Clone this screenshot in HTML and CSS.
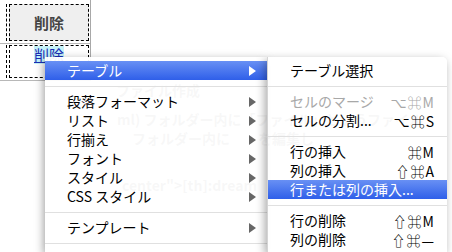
FILE: index.html
```html
<!DOCTYPE html>
<html lang="ja">
<head>
<meta charset="utf-8">
<link rel="stylesheet" href="styles.css">
</head>
<body>
<div class="doc">
  <div class="grid">
    <div class="row r1">
      <div class="stub"></div>
      <div class="cell th">削除</div>
    </div>
    <div class="row r2">
      <div class="stub"></div>
      <div class="cell td"><a class="lnk" href="#">削除</a></div>
    </div>
  </div>
  <div class="ghost">
    <div class="g1">ファイル作成</div>
    <div class="g2">ml) フォルダー内に「ファイル」というファイル</div>
    <div class="g3">フォルダー内に　　を編集し</div>
    <div class="g4">center"&gt;[th]:dream</div>
  </div>
</div>

<div class="menu main">
  <div class="item hl"><span class="label">テーブル</span><span class="arrow"></span></div>
  <div class="sep"></div>
  <div class="item"><span class="label">段落フォーマット</span><span class="arrow"></span></div>
  <div class="item"><span class="label">リスト</span><span class="arrow"></span></div>
  <div class="item"><span class="label">行揃え</span><span class="arrow"></span></div>
  <div class="item"><span class="label">フォント</span><span class="arrow"></span></div>
  <div class="item"><span class="label">スタイル</span><span class="arrow"></span></div>
  <div class="item"><span class="label">CSS スタイル</span><span class="arrow"></span></div>
  <div class="sep"></div>
  <div class="item"><span class="label">テンプレート</span><span class="arrow"></span></div>
  <div class="sep"></div>
</div>

<div class="menu sub">
  <div class="item"><span class="label">テーブル選択</span></div>
  <div class="sep"></div>
  <div class="item dis"><span class="label">セルのマージ</span><span class="key">⌥⌘M</span></div>
  <div class="item"><span class="label">セルの分割...</span><span class="key">⌥⌘S</span></div>
  <div class="sep"></div>
  <div class="item"><span class="label">行の挿入</span><span class="key">⌘M</span></div>
  <div class="item"><span class="label">列の挿入</span><span class="key">⇧⌘A</span></div>
  <div class="item hl"><span class="label">行または列の挿入...</span></div>
  <div class="sep"></div>
  <div class="item"><span class="label">行の削除</span><span class="key">⇧⌘M</span></div>
  <div class="item"><span class="label">列の削除</span><span class="key">⇧⌘&#x2014;</span></div>
</div>
</body>
</html>
```

FILE: styles.css
```css
html, body {
  margin: 0;
  padding: 0;
  background: #ffffff;
}
body {
  width: 452px;
  height: 252px;
  overflow: hidden;
  position: relative;
  font-family: "Noto Sans CJK JP", "DejaVu Sans", sans-serif;
}

/* background document */
.grid {
  width: 90px;
  border-right: 1px solid #a8a8a8;
}
.row {
  display: flex;
  gap: 2px;
}
.r1 {
  padding: 4px 0 2px;
  border-bottom: 1px solid #b8b8b8;
}
.r2 {
  padding: 1px 0 2px;
  border-bottom: 1px solid #b8b8b8;
}
.stub {
  width: 7px;
  box-sizing: border-box;
  border-right: 1px dashed #000;
}
.cell {
  width: 80px;
  box-sizing: border-box;
  border: 1px dashed #000;
}
.th {
  height: 37px;
  background: #efefef;
  color: #444;
  font-weight: bold;
  font-size: 15px;
  display: flex;
  align-items: center;
  justify-content: center;
}
.td {
  height: 33px;
  display: flex;
  justify-content: center;
  align-items: flex-start;
}
.lnk {
  font-size: 15px;
  line-height: 18px;
  color: #1c2db4;
  background: #c6f3f9;
  text-decoration: underline;
}

.ghost {
  font-size: 14px;
  font-weight: bold;
  line-height: 19px;
  color: #7a7a7a;
  white-space: nowrap;
}
.g1 { margin-left: 116px; }
.g2 { margin-left: 117px; margin-top: 10px; }
.g3 { margin-left: 132px; }
.g4 { margin-left: 122px; margin-top: 28px; }

/* menus */
.menu {
  position: absolute;
  top: 57px;
  box-sizing: border-box;
  padding-top: 4px;
  background: rgba(255, 255, 255, 0.94);
  font-size: 14px;
  color: #000;
}
.main {
  left: 45px;
  width: 222px;
  height: 195px;
  box-shadow: -1px 3px 9px rgba(0, 0, 0, 0.4);
  z-index: 1;
}
.sub {
  left: 267px;
  width: 180px;
  height: 195px;
  border-radius: 0 5px 0 0;
  border-left: 1px solid #d4d4d4;
  box-shadow: -2px 3px 10px rgba(0, 0, 0, 0.35);
  z-index: 2;
}
.item {
  height: 19px;
  display: flex;
  align-items: center;
  white-space: nowrap;
}
.main .item {
  padding: 0 11px 0 22px;
}
.sub .item {
  padding: 0 12px 0 22px;
}
.label {
  line-height: 19px;
}
.arrow {
  margin-left: auto;
  width: 0;
  height: 0;
  border-left: 7px solid #666;
  border-top: 5px solid transparent;
  border-bottom: 5px solid transparent;
}
.key {
  margin-left: auto;
  letter-spacing: 1px;
  font-size: 14px;
}
.hl {
  background: linear-gradient(#6890f4, #2f5fe9);
  color: #fff;
}
.hl .arrow {
  border-left-color: #fff;
}
.dis {
  color: #a8a8a8;
}
.sep {
  height: 12px;
  display: flex;
  align-items: center;
}
.sep::before {
  content: "";
  display: block;
  flex: 1;
  height: 1px;
  background: #e0e0e0;
}
```
